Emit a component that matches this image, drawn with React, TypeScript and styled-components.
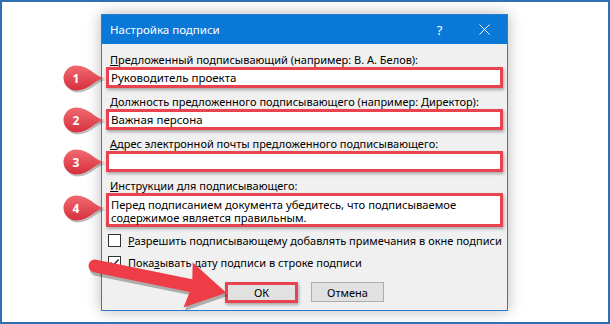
import React from "react";
import styled, { createGlobalStyle } from "styled-components";

const Global = createGlobalStyle`
  html, body { margin: 0; padding: 0; background: #fff; }
  body { font-family: "Noto Sans", "Open Sans", Arial, sans-serif; }
`;

const Page = styled.div`
  position: relative;
  width: 610px;
  height: 324px;
  box-sizing: border-box;
  border: 2px solid #2f6fb3;
  background: #fff;
  padding: 12px 0 0 99px;
  overflow: hidden;
`;

const Dialog = styled.div`
  width: 407px;
  height: 297px;
  box-sizing: border-box;
  border: 1px solid #2b7bd0;
  background: #f0f0f0;
  display: flex;
  flex-direction: column;
  box-shadow: 0 0 14px rgba(0, 0, 0, 0.28);
`;

const TitleBar = styled.div`
  height: 29px;
  flex: none;
  background: #0a78d7;
  color: #fff;
  display: flex;
  align-items: center;
  padding-left: 8px;
  font-size: 11.5px;
`;

const Title = styled.div`
  flex: 1;
`;

const TitleButton = styled.div`
  width: 45px;
  height: 29px;
  display: flex;
  align-items: center;
  justify-content: center;
  font-size: 13px;
`;

const Body = styled.div`
  padding: 8px 4px 0 4px;
  display: flex;
  flex-direction: column;
  font-size: 11px;
  color: #000;
`;

const Field = styled.div`
  display: flex;
  flex-direction: column;
  margin-bottom: 6px;
`;

const Label = styled.div`
  height: 15px;
  line-height: 15px;
  padding-left: 4px;
  white-space: nowrap;
`;

const Key = styled.span`
  text-decoration: underline;
`;

const Input = styled.div<{ $tall?: boolean }>`
  height: ${(p) => (p.$tall ? 34 : 21)}px;
  box-sizing: border-box;
  border: 3px solid #e8434f;
  background: #fff;
  padding: ${(p) => (p.$tall ? "2px 2px" : "0 2px")};
  font-size: ${(p) => (p.$tall ? 11.2 : 11.5)}px;
  line-height: ${(p) => (p.$tall ? "13px" : "15px")};
  box-shadow: 1px 2px 3px rgba(0, 0, 0, 0.3);
  white-space: pre-line;
`;

const CheckRow = styled.div<{ $first?: boolean }>`
  display: flex;
  align-items: center;
  gap: 7px;
  height: 14px;
  margin-top: ${(p) => (p.$first ? 0 : 8)}px;
  padding-left: 2px;
  white-space: nowrap;
`;

const Box = styled.div`
  flex: none;
  width: 13px;
  height: 13px;
  box-sizing: border-box;
  border: 1px solid #333;
  background: #fff;
  display: flex;
  align-items: center;
  justify-content: center;
`;

const Buttons = styled.div`
  display: flex;
  justify-content: center;
  gap: 13px;
  margin-top: 13px;
`;

const Button = styled.div<{ $marked?: boolean }>`
  width: 73px;
  height: ${(p) => (p.$marked ? 21 : 20)}px;
  box-sizing: border-box;
  border: ${(p) => (p.$marked ? "3px solid #e8434f" : "1px solid #adadad")};
  background: #e1e1e1;
  display: flex;
  align-items: center;
  justify-content: center;
  box-shadow: ${(p) => (p.$marked ? "1px 2px 3px rgba(0,0,0,0.3)" : "none")};
`;

const Marker = styled.svg<{ $top: number }>`
  position: absolute;
  left: 54px;
  top: ${(p) => p.$top}px;
  overflow: visible;
`;

const ArrowLayer = styled.svg`
  position: absolute;
  left: -2px;
  top: -2px;
  pointer-events: none;
`;

function Pin({ n, top }: { n: number; top: number }) {
  return (
    <Marker $top={top} width="50" height="28" viewBox="0 0 50 28">
      <defs>
        <linearGradient id={`pg${n}`} x1="0" y1="0" x2="0" y2="1">
          <stop offset="0" stopColor="#f06a72" />
          <stop offset="1" stopColor="#d7303c" />
        </linearGradient>
      </defs>
      <path
        d="M49,14 C40,14 34,1.5 20,1.5 A12.5,12.5 0 0 0 20,26.5 C34,26.5 40,14 49,14 Z"
        fill="rgba(0,0,0,0.25)"
        transform="translate(1.5,2)"
      />
      <path
        d="M49,14 C40,14 34,1.5 20,1.5 A12.5,12.5 0 0 0 20,26.5 C34,26.5 40,14 49,14 Z"
        fill={`url(#pg${n})`}
      />
      <text
        x="20"
        y="18.5"
        textAnchor="middle"
        fill="#fff"
        fontSize="12"
        fontWeight="bold"
        fontFamily="Noto Sans, Arial, sans-serif"
      >
        {n}
      </text>
    </Marker>
  );
}

function Arrow() {
  const d =
    "M0,-6.5 L98,-6.5 L95,-23 L134,0 L95,23 L98,6.5 L0,6.5 A6.5,6.5 0 0 1 0,-6.5 Z";
  return (
    <ArrowLayer width="610" height="324" viewBox="0 0 610 324">
      <g transform="translate(95,266) rotate(11.5)">
        <path d={d} fill="rgba(0,0,0,0.28)" transform="translate(2,3)" />
        <path d={d} fill="#ee3d47" />
      </g>
    </ArrowLayer>
  );
}

export default function App() {
  return (
    <>
      <Global />
      <Page>
        <Dialog>
          <TitleBar>
            <Title>Настройка подписи</Title>
            <TitleButton>?</TitleButton>
            <TitleButton>
              <svg width="11" height="11" viewBox="0 0 11 11">
                <path d="M0.5,0.5 L10.5,10.5 M10.5,0.5 L0.5,10.5" stroke="#fff" strokeWidth="1" />
              </svg>
            </TitleButton>
          </TitleBar>
          <Body>
            <Field>
              <Label>
                <Key>П</Key>редложенный подписывающий (например: В. А. Белов):
              </Label>
              <Input>Руководитель проекта</Input>
            </Field>
            <Field>
              <Label>
                <Key>Д</Key>олжность предложенного подписывающего (например: Директор):
              </Label>
              <Input>Важная персона</Input>
            </Field>
            <Field>
              <Label>
                <Key>А</Key>дрес электронной почты предложенного подписывающего:
              </Label>
              <Input />
            </Field>
            <Field>
              <Label>
                <Key>И</Key>нструкции для подписывающего:
              </Label>
              <Input $tall>
                {"Перед подписанием документа убедитесь, что подписываемое\nсодержимое является правильным."}
              </Input>
            </Field>
            <CheckRow $first>
              <Box />
              <span>
                <Key>Р</Key>азрешить подписывающему добавлять примечания в окне подписи
              </span>
            </CheckRow>
            <CheckRow>
              <Box>
                <svg width="11" height="11" viewBox="0 0 11 11">
                  <path d="M1.5,5.5 L4.3,8.3 L9.5,2.5" fill="none" stroke="#222" strokeWidth="1.3" />
                </svg>
              </Box>
              <span>
                Пока<Key>з</Key>ывать дату подписи в строке подписи
              </span>
            </CheckRow>
            <Buttons>
              <Button $marked>ОК</Button>
              <Button>Отмена</Button>
            </Buttons>
          </Body>
        </Dialog>
        <Pin n={1} top={62} />
        <Pin n={2} top={104} />
        <Pin n={3} top={146} />
        <Pin n={4} top={192} />
        <Arrow />
      </Page>
    </>
  );
}
